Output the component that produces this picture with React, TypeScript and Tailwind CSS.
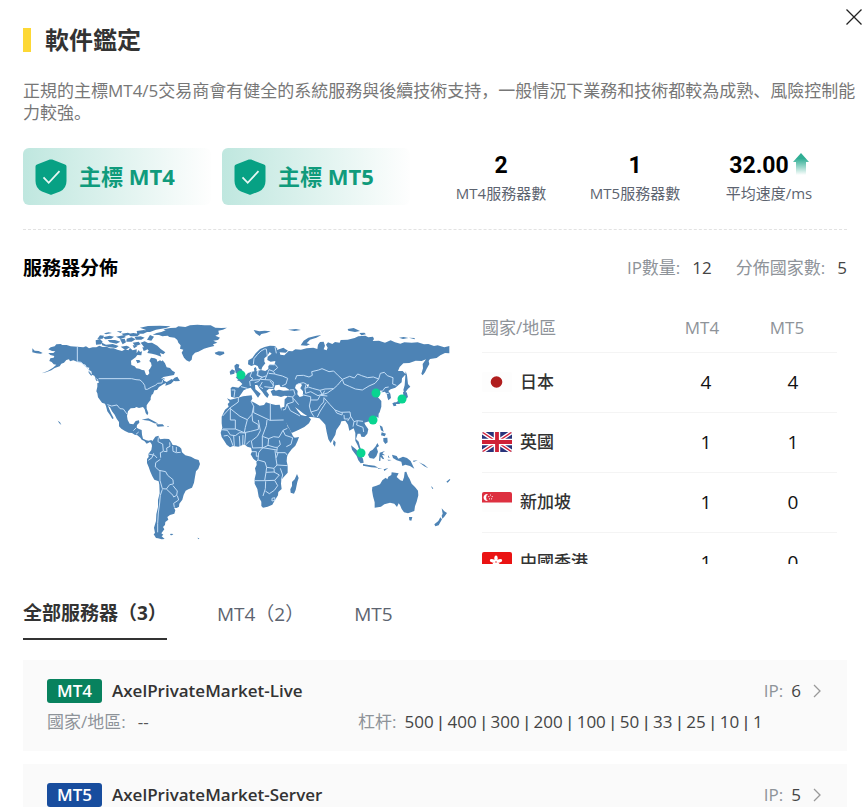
import { Fragment, type ReactNode } from "react";

const latin = "font-['Open_Sans','Noto_Sans_CJK_SC',sans-serif]";

function Shield() {
  return (
    <svg viewBox="0 0 32 36" className="h-9 w-8 shrink-0" aria-hidden="true">
      <path d="M14.8.6 2 5.4Q.5 6 .5 7.6V22q0 7.500 6.500 10.400l8 3.200q1 .4 2 0l8-3.200Q31.500 29.500 31.500 22V7.600q0-1.600-1.500-2.200L17.200.6q-1.200-.4-2.400 0Z" fill="#07a184" />
      <path d="m8.500 18.300 5.200 5.500 10.800-11.600" fill="none" stroke="#e6f7f3" strokeWidth="1.800" />
    </svg>
  );
}

function Platform({ children }: { children: ReactNode }) {
  return (
    <div className="flex h-[57px] w-[188px] items-center gap-3 rounded-md bg-linear-to-r from-[#bfe7df] to-[#fefefe] pl-3">
      <Shield />
      <span className="text-[22px] font-bold whitespace-nowrap text-[#109b7c]">{children}</span>
    </div>
  );
}

function Stat({ value, label, children }: { value: string; label: string; children?: ReactNode }) {
  return (
    <div className="flex flex-1 flex-col items-center">
      <div className="flex h-7 items-center gap-1 font-[Roboto,sans-serif] text-[23px] font-bold text-black">
        {value}
        {children}
      </div>
      <div className="text-[15px] leading-6 whitespace-nowrap text-[#5d6470]">{label}</div>
    </div>
  );
}

const northAmerica =
  "M85 118 92 112 104 109 109 103 122 102 127 105 140 105 152 109 172 110 190 112 198 109 207 115 218 112 229 112 238 107 248 111 260 110 270 115 281 115 292 119 306 123 316 118 325 121 330 114 338 121 350 118 350 130 356 120 360 126 366 124 364 136 352 135 347 142 337 149 333 152 334 165 344 169 349 175 358 176 366 180 373 181 378 194 383 196 388 190 386 181 390 176 395 167 393 158 388 153 393 143 404 145 410 148 412 155 420 151 425 154 428 151 435 160 440 172 450 174 457 182 465 187 462 195 450 197 442 199 430 201 423 207 434 204 432 212 440 216 449 211 455 207 462 212 453 221 443 225 436 227 438 219 430 223 417 231 411 240 403 241 399 252 395 254 392 263 392 269 385 278 380 286 380 296 385 309 382 316 377 309 374 298 369 291 357 294 349 291 344 294 332 295 324 304 321 318 323 330 329 341 340 343 347 333 357 331 358 338 351 345 350 353 357 357 365 360 366 374 369 386 379 391 386 392 394 390 400 397 395 402 390 396 380 401 373 393 365 389 361 383 352 376 344 374 336 369 326 368 315 363 304 356 297 349 297 336 290 326 284 314 276 304 270 292 264 287 268 298 274 311 281 325 277 327 270 315 262 304 258 289 255 281 246 278 240 270 234 262 232 250 229 244 232 230 232 219 237 218 233 208 227 205 223 197 216 194 214 184 206 180 208 173 200 172 196 164 188 161 182 155 173 156 160 151 150 154 147 148 139 150 132 158 124 161 119 169 104 174 94 181 78 187 65 190 83 183 99 173 109 164 101 163 95 156 88 153 91 145 101 143 103 138 91 135 85 129 100 129 106 124 96 123Z";

const northAmericaIslands =
  "M37 115 44 122 56 123 68 129 62 131 49 130 37 127Z M227 91l13-4 8 8-4 8-16 1Z M246 98l12 6 20-2 18 6-8 6-20-2-22-6Z M249 82l20-5 13 3-8 6-18 2Z M263 90l22 0 16 5-12 6-20-4Z M288 80l22-4 8 5-16 6Z M304 71l20-3 10 5-20 5Z M232 87l8-11 12 1-4 9Z M300 88l14-2 4 11-10 6Z M320 86l15-4 12 6-12 7-16 0Z M322 72l18-3 20 3-8 7-20 0Z M344 81l18-2 12 4-10 6-16 0Z M350 63l22-3 14 4-16 7-18 0Z M360 53l24-5 36-1 32 2-14 5-30 5-18 7-24 0 12-6Z M390 75l12 5-8 12-13-3Z M302 110l18-3 10 5-14 8Z M338 98l18-3 6 8-16 6Z M362 98l12-4 10 5 12-1 16 9 10 10 14 10-6 6-10-4 4 11-16-6-12-3-14-2 4-8-14-10Z M367 112l10 0 4 7-10 4Z M348 150l10 0 4 6-10 4Z M338 105l14 4-10 6Z M290 64l16 0-4 5Z M252 70l14-3 10 2-18 4Z M464 203l8-3 8 13-14 1-10-3Z M206 182l10 12-2 4-8-10Z M224 203l10 8-4 3Z M365 329l20-4 20 10 10 6-12-1-16-8Z M408 343l20 0 5 6-20 1Z M113 332l7 5 4 8-6-5Z M442 348l6 1-5 2Z M398 175l-5-2 8 0Z";

const greenland =
  "M398 74 410 69 424 66 437 61 430 58 451 54 468 53 475 49 496 51 510 46 532 44 554 46 572 46 586 53 604 54 621 53 609 59 595 62 597 72 586 77 600 83 594 90 580 92 592 98 579 103 583 108 567 112 552 116 535 125 525 128 517 137 515 149 508 155 499 151 492 143 485 128 490 119 480 116 482 106 475 98 472 90 464 83 448 81 443 77 427 79 417 75Z M584 128l12-4 16 1 1 6-13 6-13-4Z";

const southAmerica =
  "M394 67 402 56 406 50 415 47 420 58 433 56 447 57 453 65 458 75 468 76 479 81 484 86 486 97 496 106 513 110 525 117 536 120 540 132 535 146 528 154 525 170 522 188 516 203 505 208 497 212 491 224 487 239 478 251 477 260 470 264 462 263 466 271 463 281 450 285 442 291 445 299 436 306 435 315 429 321 433 328 424 340 430 344 425 349 434 357 425 358 414 355 408 354 401 343 405 339 402 323 408 303 409 283 414 261 414 240 419 220 418 194 416 184 403 179 397 169 391 155 386 141 381 129 381 117 386 111 385 102 394 90 396 78Z M452 341l8 1-4 4-6-1Z M532 353l6 2-2 3Z";

const africa =
  "M36 -65 46 -61 70 -67 84 -71 110 -74 112 -64 108 -57 120 -51 134 -43 147 -45 153 -53 166 -49 182 -45 194 -46 197 -35 205 -18 213 0 217 18 225 29 234 49 239 53 252 51 248 62 241 77 230 88 220 101 216 111 215 124 218 137 218 158 209 168 199 179 198 191 200 207 190 216 189 226 180 240 172 254 158 260 144 263 139 258 139 245 131 230 127 207 119 191 119 176 123 160 120 145 125 135 124 124 115 116 107 103 111 95 108 83 97 80 88 73 70 80 54 78 45 82 35 74 28 63 20 51 17 38 22 24 20 10 20 -10 30 -31 41 -40 38 -48 44 -54Z M246 162l5 12-4 12-5 24-5 11-10-3-1-10 5-10 0-12 8-8Z";

const eurasia =
  "M47 234 53 230 70 233 76 228 82 222 74 214 66 211 76 205 90 199 99 189 111 185 118 184 117 175 122 171 125 178 124 184 138 180 151 183 160 177 160 168 166 163 175 166 180 160 181 153 167 155 157 150 158 140 170 131 164 126 157 137 148 145 148 155 151 160 142 171 139 180 132 177 128 168 119 164 109 168 99 163 100 151 112 144 122 130 135 117 149 111 165 107 180 108 187 116 186 120 205 113 219 122 212 128 194 127 196 134 208 136 221 123 232 124 241 118 258 119 275 115 295 113 307 117 309 104 315 96 326 95 330 107 326 118 335 121 338 113 333 104 339 97 352 102 360 96 374 98 377 90 398 89 419 84 430 79 451 77 460 82 474 80 477 87 473 93 492 92 510 98 527 91 540 97 556 101 568 97 590 98 608 97 627 103 640 102 657 108 668 106 688 112 703 108 703 130 690 129 676 136 665 144 645 147 641 153 643 162 635 176 630 187 623 196 619 191 624 175 623 162 633 148 620 153 602 152 583 159 565 160 554 171 549 183 563 183 572 193 561 205 560 217 548 227 541 233 527 238 520 243 526 251 528 264 520 271 517 262 516 254 510 245 502 247 499 241 489 246 476 246 485 255 492 251 489 262 499 273 499 290 494 307 483 323 474 331 458 335 448 338 451 345 460 358 457 371 448 381 439 380 436 371 428 371 423 387 431 395 435 410 441 426 434 422 428 406 421 392 421 369 416 355 403 362 399 344 391 332 379 334 376 343 364 360 361 374 354 386 347 399 340 388 335 366 331 344 323 335 313 325 296 322 280 320 264 310 255 302 240 291 248 302 258 315 270 318 278 318 288 328 282 340 268 351 250 360 230 369 224 358 212 336 199 306 199 293 208 290 209 268 219 259 209 257 198 261 185 257 173 257 167 244 178 237 162 236 154 243 162 254 157 264 149 256 142 245 134 236 127 225 120 225 121 238 137 251 129 263 119 249 107 233 96 236 86 241 79 251 72 261 59 263 48 260Z M356 390l6 7-2 13-6-8Z M62 202l14-1 6 6-12 3Z M44 185l7-7 9 4-2 9-12 3Z M58 167l7-6 8 3-2 9 9 5 9 20-9 8-18-2 8-11-8-4Z M116 60l17 4 16-2 18 2-13 5-15 3-5 6-12-8Z M219 59l24-2 15 3-20 3Z M257 106l9-14 14-9 24-6 15-2-15 8-19 6-10 11 10 3-10 4Z M398 57l18-3 19 9-15 3-20-4Z M433 69l15-1 5 5-14 3Z M552 83l14-2 14 3-16 3Z M582 83l17 1 0 4Z M572 184l4 12 3 26 7 8-7 6-10 14-4-10 4-14Z M564 245l11 2 4 14-10 9-16 12-17 0 12-8 18-8Z M532 280l9-4 3 11-8 2Z M484 318l7-6-1 13Z";

const oceania =
  "M471 211 472 201 484 197 495 193 502 181 512 173 517 178 520 170 529 165 530 157 541 158 551 160 545 171 556 181 563 183 567 172 569 156 574 155 579 169 584 177 590 191 600 201 609 212 610 226 605 245 600 259 598 273 588 277 579 280 567 277 560 267 555 255 551 250 546 261 538 251 525 248 508 253 498 260 479 263 479 247 474 229Z M582 291l10 0-3 11-6-1Z M680 265l8 9 8 5-8 11-6 6-2-9 3-6Z M676 292l5 6-10 18-10 3-3-6 12-10Z M531 104l14 4 5 8 14-6 12 4 11 9 11 23-13-8-14-4-9 4-3-13-14-4-11-7Z M465 94l8-5 9-10 5-10 5 9-7 5 4 12-5 14-7 7-13-2-5-10Z M408 76l15 12 9 10 12 18 2 12-9 2-7-9-5-13-14-19Z M444 132l17 3 18 2 11 6-21-1-25-5Z M494 98l16-5-8 7 8 6-9-1 7 13-6-2-5-6-1 13-4-1 1-13Z M494 16l8 4 4 16-8-5Z M500 37l13 4-4 8-11-3Z M505 54l12-1 1 14-7 5-6-8Z M488 145l14-1-12 3Z M506 148l14-4-12 9Z M520 106l4 8-5-2Z M517 119l13 1-9 2Z M694 185l10-8 2 2-8 9Z M648 198l7 7-3 2Z M612 127l16 7 12 11-12-6Z M594 122l14-1-12 5Z";

const borders: [string, string][] = [
  [
    "0 0",
    "M172 110V155L184 158 195 168 206 178 212 190 M236 206H335L348 209 360 210 368 217 374 226 376 238 382 238 395 231 406 226 413 220 426 219 428 211 434 205 M262 284 275 288 291 285 300 296 310 297 321 312 M340 362l8-8 M356 366l-8 7",
  ],
  [
    "0 330",
    "M415 52 414 65 428 72 430 94 421 98 422 113 M385 102 404 106 411 114 M421 118 407 128 406 141 417 151 437 155 443 166 459 179 460 192 449 194 439 207 427 206 420 181 420 151 M427 208 421 226 419 249 415 279 413 310 413 337 M439 207 459 226 461 231 470 226 472 213 459 197 M472 227 476 240 461 250 463 262 M449 67 450 79 440 84 441 95 432 94 M458 78 459 94 469 98 482 97 M469 81 469 96 M385 121 396 113 401 100",
  ],
  [
    "585 330",
    "M70 -67 70 -54 46 -37 23 -12 M46 -37 46 0 61 0 61 27 24 27 M46 -34 75 -11 97 -1 111 -17 116 -41 108 -57 M116 -41 116 -22 165 1 206 0 M166 -48V1 M156 0 154 17 142 49 161 56 M111 -17 113 4 130 14 130 28 107 34 88 38 61 27 M97 -1 91 22 88 38 M130 0 136 32 127 49 109 63 M20 29 37 31 46 45 61 47 73 38 92 39 89 72 M26 48 38 46 46 55 54 77 M56 48 58 78 M73 48 75 79 M84 45 83 75 M105 62 93 74 M109 63 113 84 142 83 142 49 M161 56 176 50 192 52 204 31 217 25 M204 31 211 46 233 53 228 73 214 80 M161 56 159 76 180 82 187 82 196 74 193 61 M187 82 185 98 211 98 218 107 M159 76 141 85 131 98 129 120 123 126 M129 120 150 126 155 142 177 145 178 157 M142 83 186 90 M177 145 186 135 183 116 180 91 M186 135 218 137 M196 145 203 165 199 180 M155 142 153 157 149 182 119 182 M149 182 179 181 193 165 177 156 153 157 M152 184 151 206 144 228 M151 213 163 221 178 211 188 197 179 181 M189 98 184 113 M111 95 124 95 124 109 132 108 M171 235l8-2 1 8-9 2Z",
  ],
  [
    "585 0",
    "M115 163 117 146 127 134 138 123 149 117 154 117 157 139 M180 110 184 130 M163 164 181 164 188 173 175 184 162 179 160 184 M160 184 155 197 141 202 126 196 129 183 M111 185 105 199 114 206 104 214 106 228 M78 230 97 235 M50 240 60 240 57 262 M129 183 128 196 142 202 132 209 108 211 M155 197 150 209 137 208 129 215 119 218 M150 209 166 210 175 216 174 233 148 230 M142 216 134 230 144 236 M175 184 181 193 202 198 218 205 213 222 201 228 M161 190 180 192 M165 213 177 228 M219 259 233 261 240 253 236 239 225 240 M233 261 235 276 216 282 211 298 204 300 M216 282 226 302 255 318 M251 284 235 265 M241 208 245 197 265 196 282 201 292 196 290 185 311 180 321 176 342 185 356 183 370 197 382 208 368 225 356 236 330 237 315 241 292 235 280 231 270 235 274 222 265 218 248 222 M382 208 404 199 418 204 428 192 440 197 458 203 475 201 491 207 480 220 462 228 442 240 421 237 403 229 387 222 382 208 M491 207 496 190 508 187 517 197 534 203 533 222 544 226 M270 235 272 250 287 245 309 257 324 252 329 242 M261 254 287 260 287 270 283 288 288 306 297 320 M287 270 308 270 316 256 337 258 M288 306 308 300 316 287 326 276 327 263 M315 241 322 254 337 249 356 236 M327 263 345 284 360 300 378 307 405 306 407 319 398 333 M333 277 316 303 307 321 M360 300 365 309 381 315 382 308 M387 315 388 327 400 327 M407 319 417 335 414 350 M417 335 427 332 444 334 M427 332 425 345 444 352 446 366 M496 250 505 240 510 233 521 231 M512 251l9-1",
  ],
];

const pins: [number, number][] = [
  [241, 375],
  [376, 393],
  [402, 399],
  [373, 420],
  [361, 453],
];

function WorldMap() {
  return (
    <svg viewBox="23 310 440 240" className="h-[240px] w-[440px] shrink-0" role="img" aria-label="服務器分佈">
      <g transform="translate(20 310) scale(0.33333)">
        <g fill="#4d83b5">
          <path d={northAmerica} />
          <path d={northAmericaIslands} />
          <path d={greenland} />
          <path d={southAmerica} transform="translate(0 330)" />
          <path d={africa} transform="translate(585 330)" />
          <path d={eurasia} transform="translate(585 0)" />
          <path d={oceania} transform="translate(585 330)" />
        </g>
        <g fill="#fff" transform="translate(585 0)">
          <path d="M177 238l4-12 12-2 4 7 14 1 14 9-20 1-13-3-10 3Z M243 224l12-5 6 6-5 10 8 9 0 14-10 3-7-8 1-10-8-9Z M276 224l5-2 0 7-5 1Z" />
        </g>
        {borders.map(([offset, d]) => (
          <path key={offset} d={d} transform={`translate(${offset})`} fill="none" stroke="#c4def7" strokeWidth="3" strokeLinejoin="round" />
        ))}
      </g>
      {pins.map(([x, y]) => (
        <circle key={`${x}-${y}`} cx={x} cy={y} r="4.500" fill="#09d591" />
      ))}
    </svg>
  );
}

function Flag({ code }: { code: string }) {
  return (
    <svg viewBox="0 0 30 20" className="h-5 w-[30px] shrink-0 rounded-[2px]" aria-hidden="true">
      {code === "jp" && (
        <>
          <rect width="30" height="20" fill="#fdfdfd" />
          <circle cx="14.500" cy="10" r="5.800" fill="#b01e1e" />
        </>
      )}
      {code === "gb" && (
        <>
          <rect width="30" height="20" fill="#29337a" />
          <path d="M0 0 30 20M30 0 0 20" stroke="#fff" strokeWidth="4" />
          <path d="M0 0 30 20M30 0 0 20" stroke="#d4233c" strokeWidth="1.400" />
          <path d="M15 0v20M0 10h30" stroke="#fff" strokeWidth="6.500" />
          <path d="M15 0v20M0 10h30" stroke="#cf2036" strokeWidth="3.800" />
        </>
      )}
      {code === "sg" && (
        <>
          <rect width="30" height="20" fill="#fdfdfd" />
          <rect width="30" height="10.500" fill="#dd3040" />
          <path d="M6 2a3.600 3.600 0 1 0 0 7 4.200 4.200 0 0 1 0-7Z" fill="#fff" />
          <g fill="#fff">
            <circle cx="8.500" cy="3" r=".6" />
            <circle cx="6.800" cy="4.600" r=".6" />
            <circle cx="10.200" cy="4.600" r=".6" />
            <circle cx="7.500" cy="6.800" r=".6" />
            <circle cx="9.600" cy="6.800" r=".6" />
          </g>
        </>
      )}
      {code === "hk" && (
        <>
          <rect width="30" height="20" fill="#ea1313" />
          <g fill="#fff">
            <ellipse cx="14" cy="6.500" rx="1.700" ry="3" />
            <ellipse cx="14" cy="6.500" rx="1.700" ry="3" transform="rotate(72 14 10)" />
            <ellipse cx="14" cy="6.500" rx="1.700" ry="3" transform="rotate(144 14 10)" />
            <ellipse cx="14" cy="6.500" rx="1.700" ry="3" transform="rotate(216 14 10)" />
            <ellipse cx="14" cy="6.500" rx="1.700" ry="3" transform="rotate(288 14 10)" />
          </g>
        </>
      )}
    </svg>
  );
}

const countries = [
  { code: "jp", name: "日本", mt4: 4, mt5: 4 },
  { code: "gb", name: "英國", mt4: 1, mt5: 1 },
  { code: "sg", name: "新加坡", mt4: 1, mt5: 0 },
  { code: "hk", name: "中國香港", mt4: 1, mt5: 0 },
];

function Distribution() {
  return (
    <div className="mr-[10px] h-[260px] min-w-0 flex-1 overflow-y-auto [scrollbar-width:none]">
      <table className="w-full table-fixed border-collapse">
        <colgroup>
          <col />
          <col className="w-[86px]" />
          <col className="w-[88px]" />
        </colgroup>
        <thead>
          <tr className="h-12 border-b border-[#f4f4f4] text-[17px] text-[#8e9399]">
            <th className="text-left font-normal">國家/地區</th>
            <th className="pr-2 font-normal">MT4</th>
            <th className="pr-3 font-normal">MT5</th>
          </tr>
        </thead>
        <tbody>
          {countries.map((c) => (
            <tr key={c.code} className="h-[60px] border-b border-[#f4f4f4]">
              <td>
                <span className="flex items-center gap-2 text-[17px] font-medium text-[#333]">
                  <Flag code={c.code} />
                  {c.name}
                </span>
              </td>
              <td className="text-center text-[19px] text-[#111]">{c.mt4}</td>
              <td className="text-center text-[19px] text-[#111]">{c.mt5}</td>
            </tr>
          ))}
        </tbody>
      </table>
    </div>
  );
}

function Server({ type, name, ip, children }: { type: string; name: string; ip: number; children?: ReactNode }) {
  return (
    <article className="bg-[#fafafa] pt-[18px] pr-[26px] pb-4 pl-6">
      <div className="flex h-[26px] items-center">
        <span className={`flex h-6 w-[55px] items-center justify-center rounded-[3px] text-[17px] font-semibold text-white ${type === "MT4" ? "bg-[#08825e]" : "bg-[#184d9e]"}`}>
          {type}
        </span>
        <h3 className="ml-[10px] text-[17px] font-semibold text-[#333]">{name}</h3>
        <button type="button" className="ml-auto flex items-center text-[17px]">
          <span className="text-[#8e9399]">IP:</span>
          <span className="ml-2 text-[#444]">{ip}</span>
          <svg viewBox="0 0 8 14" className="ml-3 h-[14px] w-2" aria-hidden="true">
            <path d="m1 1 6 6-6 6" fill="none" stroke="#999" strokeWidth="1.300" />
          </svg>
        </button>
      </div>
      <div className="mt-1 flex h-[27px] items-center text-[17px] whitespace-nowrap">{children}</div>
    </article>
  );
}

const leverages = [500, 400, 300, 200, 100, 50, 33, 25, 10, 1];

function Details() {
  return (
    <>
      <span className="w-[311px]">
        <span className="text-[#8e9399]">國家/地區:</span>
        <span className="ml-3 text-[#555]">--</span>
      </span>
      <span className="text-[#8e9399]">杠杆:</span>
      <span className="ml-2 text-[#444]">
        {leverages.map((value, i) => (
          <Fragment key={value}>
            {i > 0 && <span className="font-['Liberation_Sans',sans-serif] leading-none"> | </span>}
            {value}
          </Fragment>
        ))}
      </span>
    </>
  );
}

export default function App() {
  return (
    <main className={`relative h-screen overflow-y-auto bg-white pr-[18px] pl-[23px] [scrollbar-width:none] ${latin}`}>
      <button type="button" aria-label="關閉" className="absolute top-[9px] right-[3px]">
        <svg viewBox="0 0 16 16" className="size-4" aria-hidden="true">
          <path d="m.5.5 15 15m0-15-15 15" stroke="#222" strokeWidth="1.300" />
        </svg>
      </button>

      <header className="flex items-center gap-[14px] pt-[22px]">
        <span className="h-6 w-2 bg-[#fdd835]" />
        <h1 className="text-[24px] leading-9 font-bold text-[#333]">軟件鑑定</h1>
      </header>

      <p className="mt-[22px] -mr-4 text-[17px] leading-[22px] text-[#777]">
        正規的主標MT4/5交易商會有健全的系統服務與後續技術支持，一般情況下業務和技術都較為成熟、風險控制能力較強。
      </p>

      <section className="mt-6 flex items-center gap-[11px] border-b border-dashed border-[#e2e2e2] pb-6">
        <Platform>主標 MT4</Platform>
        <Platform>主標 MT5</Platform>
        <div className="mr-[11px] ml-[13px] flex flex-1 pt-1">
          <Stat value="2" label="MT4服務器數" />
          <Stat value="1" label="MT5服務器數" />
          <Stat value="32.00" label="平均速度/ms">
            <svg viewBox="0 0 16 22" className="mb-[6px] h-[22px] w-4" aria-hidden="true">
              <defs>
                <linearGradient id="rise" x1="0" y1="0" x2="0" y2="1">
                  <stop offset=".25" stopColor="#30ae94" />
                  <stop offset="1" stopColor="#30ae94" stopOpacity="0" />
                </linearGradient>
              </defs>
              <path d="m8 0 8 9h-3v13H3V9H0Z" fill="url(#rise)" />
            </svg>
          </Stat>
        </div>
      </section>

      <section>
        <div className="mt-[23px] flex h-[30px] items-center">
          <h2 className="text-[19px] font-bold text-black">服務器分佈</h2>
          <div className="ml-auto flex gap-6 text-[17px]">
            <span>
              <span className="text-[#8e9399]">IP數量:</span>
              <span className="ml-3 text-[#444]">12</span>
            </span>
            <span>
              <span className="text-[#8e9399]">分佈國家數:</span>
              <span className="ml-3 text-[#444]">5</span>
            </span>
          </div>
        </div>
        <div className="mt-[21px] flex items-start gap-[19px]">
          <div className="pt-[6px]">
            <WorldMap />
          </div>
          <Distribution />
        </div>
      </section>

      <section>
        <nav className="mt-[24px] flex h-[52px] gap-[50px] text-[19px] text-[#5d6470]" role="tablist">
          <button type="button" role="tab" aria-selected="true" className="border-b-2 border-[#333] font-bold text-[#333]">
            全部服務器（3）
          </button>
          <button type="button" role="tab" aria-selected="false">
            MT4（2）
          </button>
          <button type="button" role="tab" aria-selected="false">
            MT5
          </button>
        </nav>
        <div className="mt-5 flex flex-col gap-[13px]">
          <Server type="MT4" name="AxelPrivateMarket-Live" ip={6}>
            <Details />
          </Server>
          <Server type="MT5" name="AxelPrivateMarket-Server" ip={5} />
        </div>
      </section>
    </main>
  );
}
